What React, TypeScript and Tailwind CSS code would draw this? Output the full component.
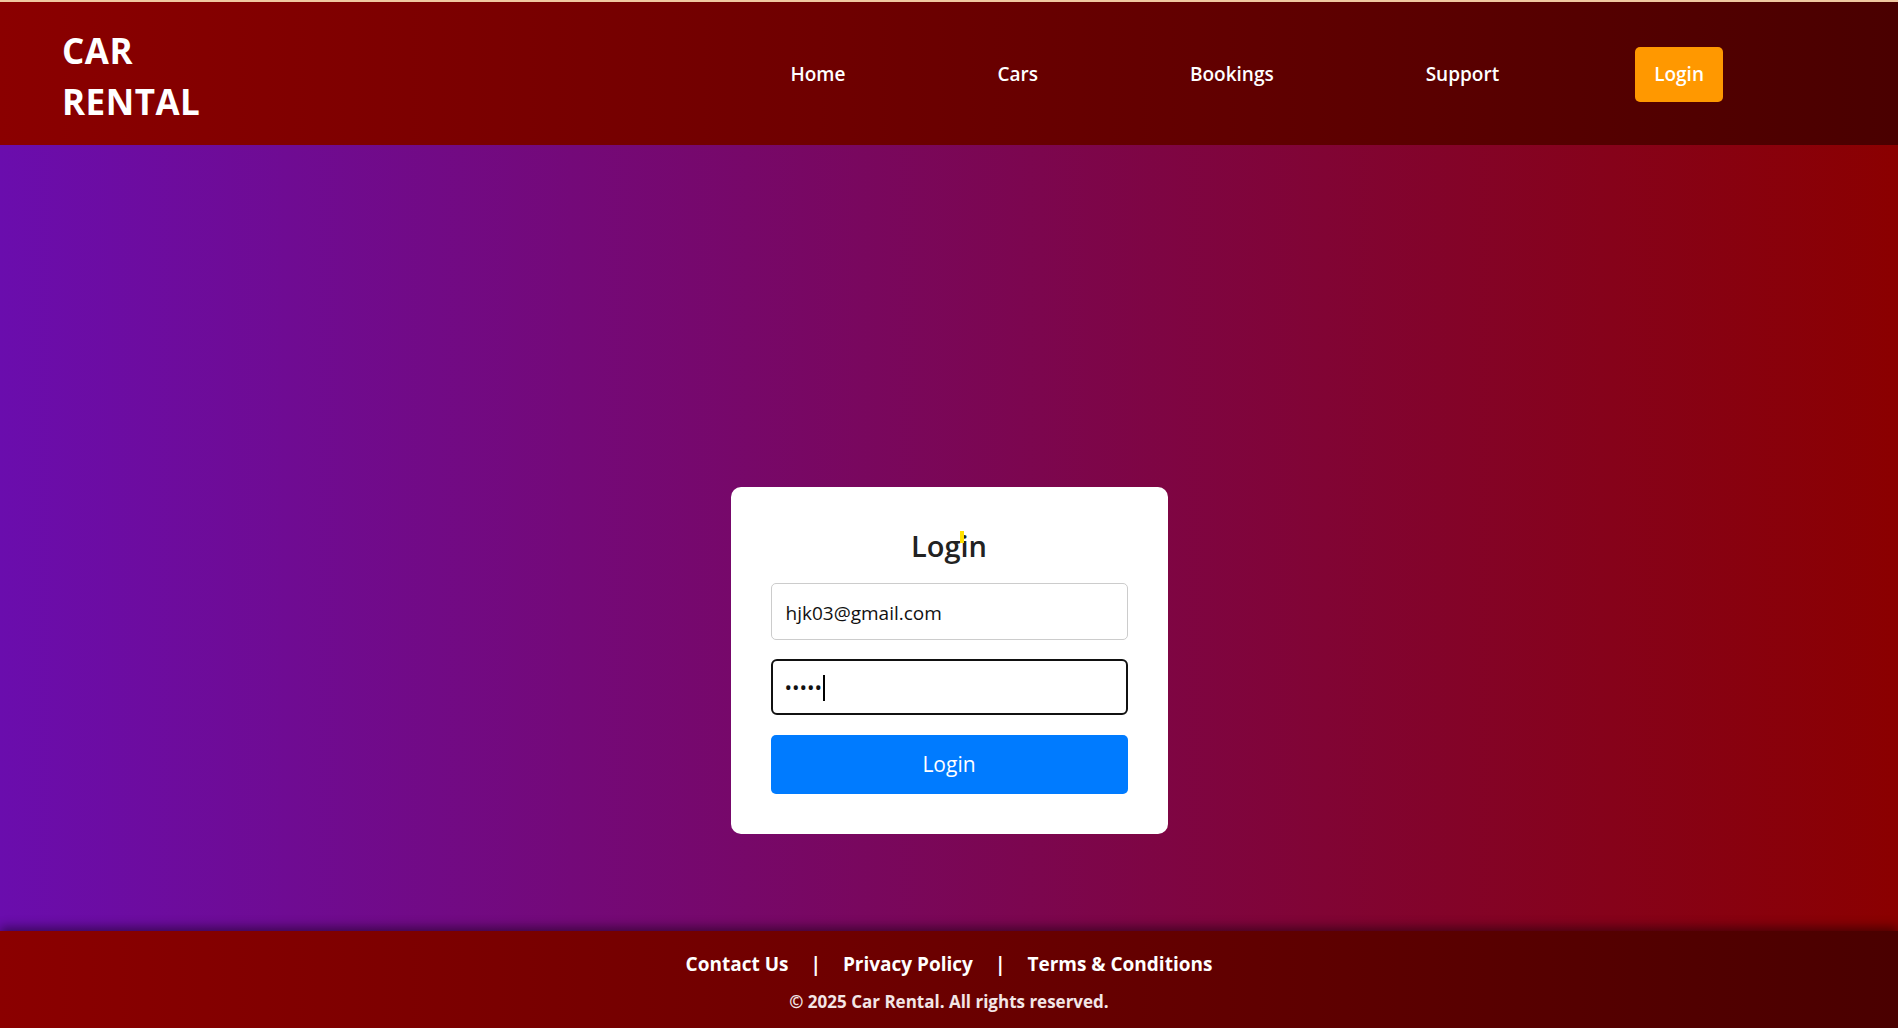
import React from "react";

const font = { fontFamily: '"Open Sans", "Noto Sans", sans-serif' };

const Header = () => {
  const links = ["Home", "Cars", "Bookings", "Support"];

  return (
    <header className="flex items-center justify-between bg-[linear-gradient(to_right,#8b0000,#4a0000)] pl-[62px] pr-[175px] pt-[23px] pb-[18px] text-white">
      <div className="w-[150px] text-[35px] font-bold leading-[51px] tracking-[0.5px]">CAR RENTAL</div>
      <nav className="mb-[4px] flex items-center gap-[112px] text-[19px] font-semibold">
        {links.map((link) => (
          <a key={link} href="#" className="px-5">
            {link}
          </a>
        ))}
        <a href="#" className="ml-[4px] flex h-[55px] items-center rounded-[5px] bg-[#ff9800] px-[19px]">
          Login
        </a>
      </nav>
    </header>
  );
};

const LoginCard = () => (
  <div className="w-[437px] rounded-[10px] bg-white p-10">
    <h2 className="relative mb-[18px] text-center text-[29px] font-semibold leading-[38px] text-[#222]">
      Login
      <span className="absolute left-[189px] top-[4px] h-[12px] w-[4px] bg-[#ffe000]" />
    </h2>
    <div className="flex h-[57px] items-center rounded-[5px] border border-[#ccc] px-[14px] pt-[3px] text-[19px] text-[#111]">
      hjk03@gmail.com
    </div>
    <div className="mt-[19px] flex h-[56px] items-center rounded-[6px] border-2 border-[#111] px-[12px] pt-[2px] text-[20px] text-[#111]">
      <span>•••••</span>
      <span className="ml-[1px] h-[26px] w-[2px] bg-black" />
    </div>
    <button className="mt-[20px] h-[59px] w-full rounded-[5px] bg-[#007bff] text-[21px] text-white">Login</button>
  </div>
);

const Footer = () => (
  <footer className="relative flex h-[97px] flex-col items-center bg-[linear-gradient(to_right,#8b0000,#4a0000)] pt-[19px] text-white shadow-[0_-4px_10px_rgba(0,0,0,0.45)]">
    <div className="flex items-center gap-[22px] text-[19px] font-bold leading-[28px]">
      <a href="#">Contact Us</a>
      <span>|</span>
      <a href="#">Privacy Policy</a>
      <span>|</span>
      <a href="#">Terms &amp; Conditions</a>
    </div>
    <p className="mt-[13px] text-[17px] font-bold leading-[22px] text-[#f3e6e6]">© 2025 Car Rental. All rights reserved.</p>
  </footer>
);

export default function App() {
  return (
    <div className="flex h-screen flex-col overflow-hidden" style={font}>
      <div className="h-[2px] bg-[#f0c8a0]" />
      <Header />
      <main className="flex flex-1 items-end justify-center bg-[linear-gradient(to_right,#6a0dad,#8b0000)] pb-[97px]">
        <LoginCard />
      </main>
      <Footer />
    </div>
  );
}
